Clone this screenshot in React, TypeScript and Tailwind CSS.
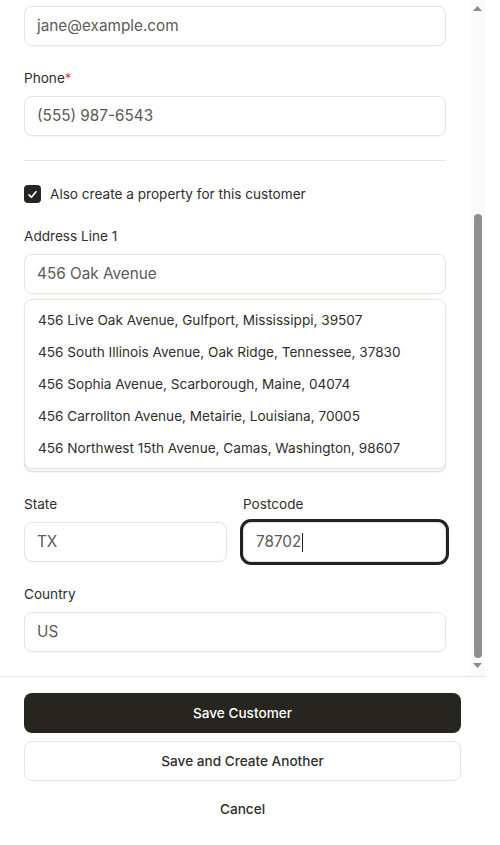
import React, { useLayoutEffect, useRef } from "react";

function Field({
  label,
  value,
  required,
  focused,
}: {
  label: string;
  value: string;
  required?: boolean;
  focused?: boolean;
}) {
  return (
    <div className="flex flex-col">
      <label className="text-[13.6px] leading-5 text-[#2e2e2b] mb-2">
        {label}
        {required && <span className="text-[#e5484d]">*</span>}
      </label>
      <div
        className={
          "h-10 rounded-lg border border-[#e6e4df] bg-white flex items-center px-3 text-[15.3px] text-[#5a5a57] " +
          (focused ? "shadow-[0_0_0_3px_#222220]" : "shadow-[0_1px_1px_rgba(0,0,0,0.03)]")
        }
      >
        <span>{value}</span>
        {focused && <span className="w-px h-[19px] bg-[#222] ml-[1px]" />}
      </div>
    </div>
  );
}

const suggestions = [
  "456 Live Oak Avenue, Gulfport, Mississippi, 39507",
  "456 South Illinois Avenue, Oak Ridge, Tennessee, 37830",
  "456 Sophia Avenue, Scarborough, Maine, 04074",
  "456 Carrollton Avenue, Metairie, Louisiana, 70005",
  "456 Northwest 15th Avenue, Camas, Washington, 98607",
];

function FakeScrollbar() {
  return (
    <div className="w-[15px] shrink-0 h-full bg-[#fafafa] flex flex-col items-center pt-[6px] pb-[8px]">
      <svg width="9" height="5" viewBox="0 0 9 5">
        <path d="M4.5 0 9 5H0Z" fill="#8a8a8a" />
      </svg>
      <div className="mt-auto w-2 h-[444px] rounded-full bg-[#8f8f8f]" />
      <svg width="9" height="5" viewBox="0 0 9 5" className="mt-[5px]">
        <path d="M0 0H9L4.5 5Z" fill="#8a8a8a" />
      </svg>
    </div>
  );
}

export default function App() {
  const ref = useRef<HTMLDivElement>(null);
  useLayoutEffect(() => {
    if (ref.current) ref.current.scrollTop = ref.current.scrollHeight;
  }, []);
  return (
    <div className="w-[485px] h-[845px] flex flex-col bg-white font-['Inter',sans-serif] text-[#2b2b28]">
      <div className="h-[676px] shrink-0 flex">
        <div
          ref={ref}
          className="w-[470px] h-full overflow-y-scroll [scrollbar-width:none]"
        >
          <div className="px-6 pt-[18px] pb-6 flex flex-col">
            <div className="flex flex-col gap-[22px]">
              <Field label="First Name" value="Jane" required />
              <Field label="Last Name" value="Smith" required />
              <Field label="Company Name" value="Smith Holdings" />
              <Field label="Email" value="jane@example.com" />
              <Field label="Phone" value="(555) 987-6543" required />
            </div>
            <div className="border-t border-[#e8e6e1] mt-6" />
            <label className="mt-[23px] h-5 flex items-center gap-[9px] text-[13.6px] text-[#2e2e2b]">
              <span className="w-[17px] h-[18px] rounded-[4px] bg-[#262520] flex items-center justify-center">
                <svg width="11" height="11" viewBox="0 0 12 12" fill="none">
                  <path
                    d="M2.2 6.4 4.8 9 9.8 3"
                    stroke="white"
                    strokeWidth="1.8"
                    strokeLinecap="round"
                    strokeLinejoin="round"
                  />
                </svg>
              </span>
              Also create a property for this customer
            </label>
            <div className="mt-[22px] flex flex-col gap-[21px]">
              <div className="relative">
                <Field label="Address Line 1" value="456 Oak Avenue" />
                <div className="absolute left-0 right-0 top-full mt-[5px] z-10 rounded-lg border border-[#e6e4df] bg-white shadow-[0_2px_4px_rgba(0,0,0,0.06)] py-1">
                  {suggestions.map((s) => (
                    <div
                      key={s}
                      className="h-8 flex items-center px-[13px] text-[13.6px] text-[#2e2e2b]"
                    >
                      {s}
                    </div>
                  ))}
                </div>
              </div>
              <Field label="Address Line 2" value="" />
              <Field label="City" value="Austin" />
              <div className="grid grid-cols-2 gap-4 mt-px">
                <Field label="State" value="TX" />
                <Field label="Postcode" value="78702" focused />
              </div>
              <div className="mt-px">
                <Field label="Country" value="US" />
              </div>
            </div>
          </div>
        </div>
        <FakeScrollbar />
      </div>
      <div className="border-t border-[#e8e6e1] px-6 py-4 flex flex-col gap-2">
        <button className="h-10 rounded-lg bg-[#272520] text-white text-[13.6px] font-medium">
          Save Customer
        </button>
        <button className="h-10 rounded-lg bg-white border border-[#e6e4df] text-[#2e2e2b] text-[13.6px] font-medium">
          Save and Create Another
        </button>
        <button className="h-10 rounded-lg text-[#2e2e2b] text-[13.6px] font-medium">
          Cancel
        </button>
      </div>
    </div>
  );
}
